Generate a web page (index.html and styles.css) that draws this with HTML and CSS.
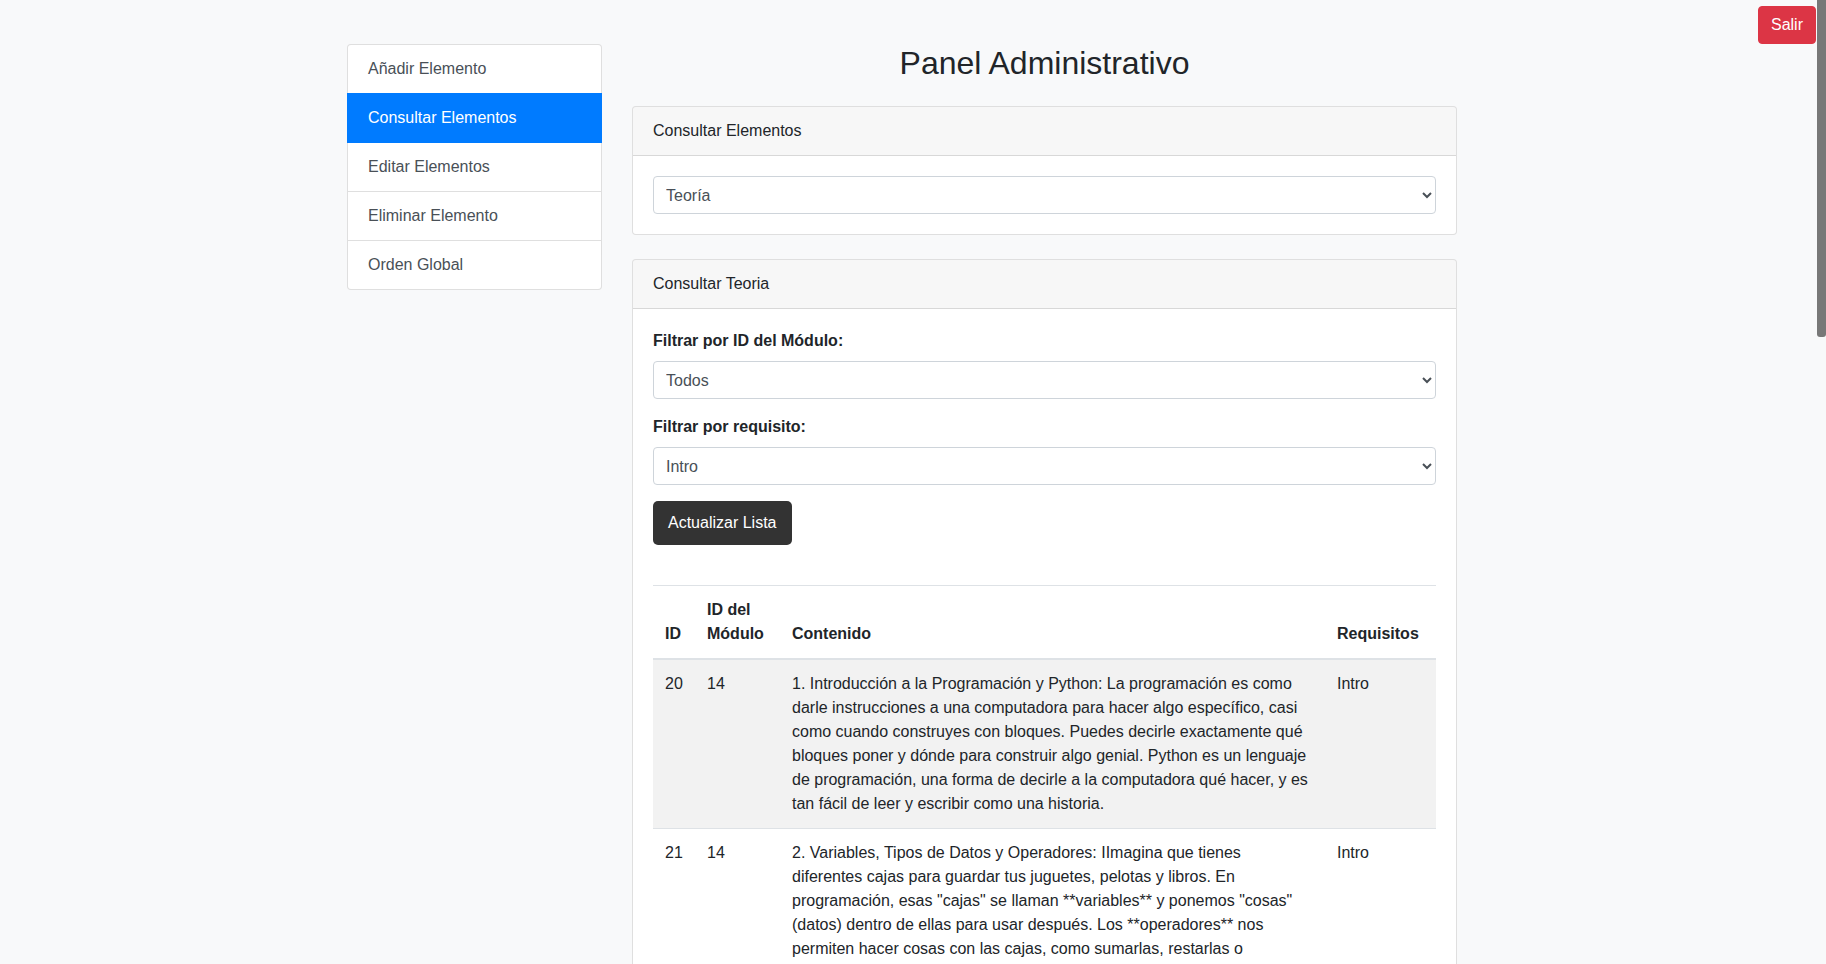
FILE: index.html
```html
<!DOCTYPE html>
<html lang="es">
<head>
<meta charset="utf-8">
<title>Panel Administrativo</title>
<link rel="stylesheet" href="styles.css">
</head>
<body>
<div class="scroll-thumb" aria-hidden="true"></div>
<button class="btn-logout" type="button">Salir</button>
<div class="page">
  <aside class="sidebar">
    <nav class="menu">
      <a class="menu-item" href="#">Añadir Elemento</a>
      <a class="menu-item active" href="#">Consultar Elementos</a>
      <a class="menu-item" href="#">Editar Elementos</a>
      <a class="menu-item" href="#">Eliminar Elemento</a>
      <a class="menu-item" href="#">Orden Global</a>
    </nav>
  </aside>
  <main class="main">
    <h2 class="title">Panel Administrativo</h2>
    <section class="card">
      <div class="card-header">Consultar Elementos</div>
      <div class="card-body">
        <select class="select"><option>Teoría</option><option>Ejercicios</option></select>
      </div>
    </section>
    <section class="card card-next">
      <div class="card-header">Consultar Teoria</div>
      <div class="card-body">
        <div class="field">
          <label class="label">Filtrar por ID del Módulo:</label>
          <select class="select"><option>Todos</option></select>
        </div>
        <div class="field">
          <label class="label">Filtrar por requisito:</label>
          <select class="select"><option>Intro</option></select>
        </div>
        <button class="btn-update" type="button">Actualizar Lista</button>
        <table class="table">
          <thead>
            <tr>
              <th class="col-id">ID</th>
              <th class="col-mod">ID del Módulo</th>
              <th class="col-content">Contenido</th>
              <th class="col-req">Requisitos</th>
            </tr>
          </thead>
          <tbody>
            <tr>
              <td>20</td><td>14</td>
              <td>1. Introducción a la Programación y Python: La programación es como darle instrucciones a una computadora para hacer algo específico, casi como cuando construyes con bloques. Puedes decirle exactamente qué bloques poner y dónde para construir algo genial. Python es un lenguaje de programación, una forma de decirle a la computadora qué hacer, y es tan fácil de leer y escribir como una historia.</td>
              <td>Intro</td>
            </tr>
            <tr>
              <td>21</td><td>14</td>
              <td>2. Variables, Tipos de Datos y Operadores: IImagina que tienes diferentes cajas para guardar tus juguetes, pelotas y libros. En programación, esas "cajas" se llaman **variables** y ponemos "cosas" (datos) dentro de ellas para usar después. Los **operadores** nos permiten hacer cosas con las cajas, como sumarlas, restarlas o compararlas para saber cuál tiene más cosas dentro.</td>
              <td>Intro</td>
            </tr>
            <tr>
              <td>22</td><td>14</td>
              <td>3. Estructuras de Control: Las estructuras de control son como las reglas de un juego. Con **if** y **else** la computadora puede tomar decisiones, igual que tú decides si llevar paraguas cuando llueve. Así el programa puede elegir qué camino seguir dependiendo de lo que pase, y hacer cosas distintas en cada situación que se encuentre.</td>
              <td>Intro</td>
            </tr>
            <tr>
              <td>23</td><td>14</td>
              <td>4. Bucles: Un bucle es como cantar el estribillo de una canción muchas veces. En lugar de escribir la misma instrucción una y otra vez, usamos **for** y **while** para que la computadora repita algo tantas veces como necesitemos. Es muy útil cuando tenemos muchas cosas que revisar, como contar todos los juguetes de una caja grande.</td>
              <td>Intro</td>
            </tr>
            <tr>
              <td>24</td><td>14</td>
              <td>5. Listas y Colecciones: Una lista es como una fila de casilleros numerados donde puedes guardar muchas cosas en orden. Puedes añadir nuevas cosas al final, sacar las que ya no quieres o mirar qué hay en un casillero concreto usando su número. Python también tiene **tuplas**, **diccionarios** y **conjuntos** para organizar los datos de distintas maneras.</td>
              <td>Intro</td>
            </tr>
            <tr>
              <td>25</td><td>14</td>
              <td>6. Funciones: Una función es como una receta de cocina que puedes usar siempre que quieras. Le das un nombre, escribes los pasos una sola vez y luego solo tienes que llamarla para que haga su trabajo. Las funciones pueden recibir ingredientes, llamados **parámetros**, y devolver un resultado, como un pastel recién horneado.</td>
              <td>Intro</td>
            </tr>
            <tr>
              <td>26</td><td>14</td>
              <td>7. Cadenas de Texto: Las cadenas son palabras y frases que la computadora puede leer y cambiar. Puedes unirlas, cortarlas en trozos, ponerlas en mayúsculas o buscar una letra escondida dentro de ellas. Es como jugar con letras magnéticas en la puerta de la nevera, moviéndolas para formar nuevas palabras y mensajes divertidos.</td>
              <td>Intro</td>
            </tr>
            <tr>
              <td>27</td><td>14</td>
              <td>8. Entrada y Salida de Datos: Un programa puede hablar contigo y escucharte. Con **print** la computadora te muestra mensajes en la pantalla, y con **input** te hace preguntas y espera tu respuesta. Así puedes crear juegos de preguntas, calculadoras o pequeños asistentes que responden a lo que escribes con el teclado.</td>
              <td>Intro</td>
            </tr>
            <tr>
              <td>28</td><td>14</td>
              <td>9. Errores y Excepciones: A veces los programas se equivocan, igual que nosotros cuando aprendemos algo nuevo. Python nos avisa con mensajes de error que explican qué pasó y dónde. Con **try** y **except** podemos preparar un plan de emergencia para que el programa no se detenga y sepa qué hacer cuando algo sale mal.</td>
              <td>Intro</td>
            </tr>
            <tr>
              <td>29</td><td>14</td>
              <td>10. Módulos y Bibliotecas: Los módulos son como cajas de herramientas que otras personas ya han preparado para nosotros. Con **import** podemos traer herramientas para hacer cálculos, generar números al azar o trabajar con fechas sin tener que construirlas desde cero. Es como pedir prestadas piezas especiales para terminar nuestra construcción.</td>
              <td>Intro</td>
            </tr>
            <tr>
              <td>30</td><td>14</td>
              <td>11. Proyecto Final: Ahora que conoces las piezas básicas, es momento de juntarlas todas para crear tu propio programa. Puedes hacer un juego de adivinanzas, una lista de tareas o una pequeña aventura de texto. Lo más importante es experimentar, equivocarte, aprender de los errores y, sobre todo, divertirte programando.</td>
              <td>Intro</td>
            </tr>
          </tbody>
        </table>
      </div>
    </section>
  </main>
</div>
</body>
</html>
```

FILE: styles.css
```css
*, *::before, *::after {
  box-sizing: border-box;
}

body {
  margin: 0;
  background: #f8f9fa;
  color: #212529;
  font-family: "Liberation Sans", Arial, sans-serif;
  font-size: 16px;
  line-height: 1.5;
  padding-right: 22px;
}

.scroll-thumb {
  position: fixed;
  top: 0;
  right: 0;
  width: 9px;
  height: 337px;
  background: #787878;
  border-radius: 0 0 3px 3px;
  z-index: 10;
}

.btn-logout {
  position: fixed;
  top: 6px;
  right: 10px;
  background: #dc3545;
  color: #fff;
  border: 1px solid #dc3545;
  border-radius: 4px;
  padding: 6px 12px;
  font-family: inherit;
  font-size: 16px;
  line-height: 1.5;
  cursor: pointer;
}

.page {
  display: flex;
  gap: 30px;
  align-items: flex-start;
  width: 1110px;
  margin: 44px auto 0;
  padding-bottom: 40px;
}

.sidebar {
  flex: 0 0 255px;
}

.menu {
  display: flex;
  flex-direction: column;
}

.menu-item {
  display: block;
  padding: 12px 20px;
  color: #495057;
  background: #fff;
  text-decoration: none;
  border: 1px solid rgba(0, 0, 0, 0.125);
}

.menu-item + .menu-item {
  border-top-width: 0;
}

.menu-item:first-child {
  border-radius: 4px 4px 0 0;
}

.menu-item:last-child {
  border-radius: 0 0 4px 4px;
}

.menu-item.active {
  background: #007bff;
  color: #fff;
  border-color: #007bff;
}

.menu-item + .menu-item.active {
  margin-top: -1px;
  border-top-width: 1px;
}

.main {
  flex: 1 1 auto;
  min-width: 0;
}

.title {
  margin: 0 0 24px;
  font-size: 32px;
  font-weight: 500;
  line-height: 1.2;
  text-align: center;
  color: #212529;
}

.card {
  background: #fff;
  border: 1px solid rgba(0, 0, 0, 0.125);
  border-radius: 4px;
}

.card-next {
  margin-top: 24px;
}

.card-header {
  padding: 12px 20px;
  background: rgba(0, 0, 0, 0.03);
  border-bottom: 1px solid rgba(0, 0, 0, 0.125);
  border-radius: 3px 3px 0 0;
}

.card-body {
  padding: 20px;
}

.field {
  margin-bottom: 16px;
}

.label {
  display: block;
  margin-bottom: 8px;
  font-weight: 700;
}

.select {
  display: block;
  width: 100%;
  height: 38px;
  padding: 6px 8px;
  font-family: inherit;
  font-size: 16px;
  line-height: 1.5;
  color: #495057;
  background: #fff;
  border: 1px solid #ced4da;
  border-radius: 4px;
}

.btn-update {
  display: inline-block;
  padding: 10px 15px;
  background: #333;
  color: #fff;
  border: 0;
  border-radius: 5px;
  font-family: inherit;
  font-size: 16px;
  line-height: 1.5;
  cursor: pointer;
}

.table {
  width: 100%;
  margin-top: 40px;
  border-collapse: collapse;
  table-layout: fixed;
  color: #212529;
}

.table th,
.table td {
  padding: 12px;
  border-top: 1px solid #dee2e6;
  text-align: left;
}

.table th {
  vertical-align: bottom;
  border-bottom: 2px solid #dee2e6;
  font-weight: 700;
}

.table td {
  vertical-align: top;
}

.table tbody tr:nth-child(odd) {
  background: rgba(0, 0, 0, 0.05);
}

.col-id { width: 42px; }
.col-mod { width: 85px; }
.col-req { width: 111px; }
```
